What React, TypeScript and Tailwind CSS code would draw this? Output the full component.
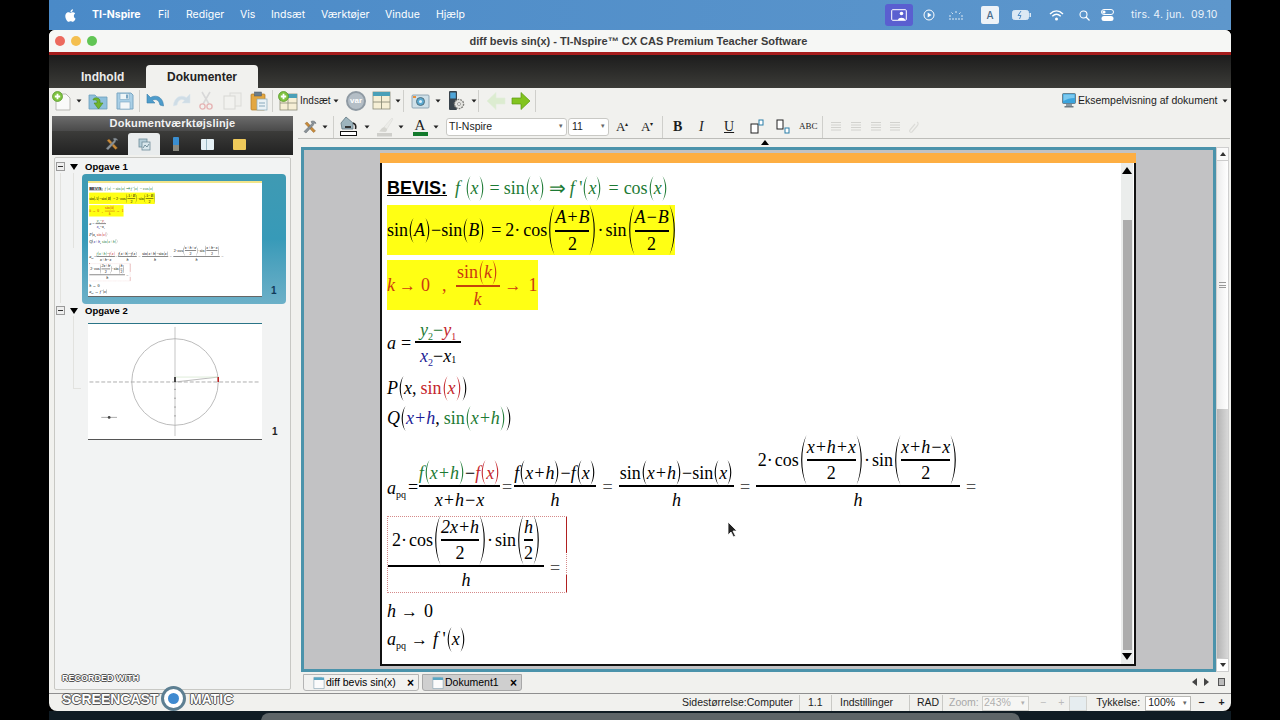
import React from "react";

const Paren = ({ h = 24, right = false, w = 6 }: { h?: number; right?: boolean; w?: number }) => (
  <svg width={w} height={h} viewBox={`0 0 ${w} ${h}`} className="shrink-0 block">
    <path
      transform={right ? `translate(${w},0) scale(-1,1)` : undefined}
      d={`M${w - 0.5},0 C${0.4},${h * 0.28} ${0.4},${h * 0.72} ${w - 0.5},${h} C${1.9},${h * 0.72} ${1.9},${h * 0.28} ${w - 0.5},0Z`}
      fill="currentColor"
    />
  </svg>
);

const I = ({ children }: { children: React.ReactNode }) => <span className="italic">{children}</span>;

const Par = ({ children, h = 25, w = 6 }: { children: React.ReactNode; h?: number; w?: number }) => (
  <span className="inline-flex items-center">
    <Paren h={h} w={w} />
    {children}
    <Paren h={h} w={w} right />
  </span>
);

const Frac = ({ n, d, line = "border-black", dh = "h-[25px]", cls = "" }: { n: React.ReactNode; d: React.ReactNode; line?: string; dh?: string; cls?: string }) => (
  <span className={`inline-flex flex-col items-stretch ${cls}`}>
    <span className={`flex items-center justify-center border-b-2 ${line} whitespace-nowrap`}>{n}</span>
    <span className={`flex items-center justify-center ${dh} whitespace-nowrap`}>{d}</span>
  </span>
);

const Half = ({ t }: { t: React.ReactNode }) => (
  <Frac n={<span className="h-[25px] flex items-center">{t}</span>} d="2" line="border-black" dh="h-[24px]" />
);

const Sub = ({ children, cls = "" }: { children: React.ReactNode; cls?: string }) => (
  <sub className={`text-[10px] not-italic align-baseline relative top-[4px] ${cls}`}>{children}</sub>
);

const Apq = () => (
  <span className="whitespace-nowrap">
    <I>a</I>
    <Sub>pq</Sub>
  </span>
);

const G = "text-[#1d7a34]";
const R = "text-[#c4262c]";
const B = "text-[#1c1c96]";

const Yellow1 = () => (
  <div className="flex items-center h-[50px] w-[288px] bg-[#ffff14] whitespace-nowrap overflow-hidden">
    <span>sin</span>
    <Par><I>A</I></Par>
    <span>−sin</span>
    <Par><I>B</I></Par>
    <span className="ml-[6px]">=</span>
    <span className="ml-[4px]">2·</span>
    <span className="ml-[3px]">cos</span>
    <Paren h={50} w={8} />
    <Half t={<I>A+B</I>} />
    <Paren h={50} w={8} right />
    <span>·</span>
    <span className="ml-[2px]">sin</span>
    <Paren h={50} w={8} />
    <Half t={<I>A−B</I>} />
    <Paren h={50} w={8} right />
  </div>
);

const DocMath = () => (
  <div className="pl-[5px] pt-[13px] font-['Liberation_Serif',serif] text-[18px] leading-none text-black">
    <div className="flex items-center h-[24px] whitespace-nowrap">
      <span className="font-['Liberation_Sans',sans-serif] font-bold underline text-[18px] mr-[8px]">BEVIS:</span>
      <span className={`flex items-center ${G}`}>
        <I>f</I>&nbsp;<Par><I>x</I></Par><span className="ml-[5px]">=</span><span className="ml-[4px]">sin</span><Par><I>x</I></Par><span className="mx-[4px] text-[20px]">⇒</span><I>f</I>&nbsp;'<Par><I>x</I></Par><span className="ml-[6px]">=</span><span className="ml-[5px]">cos</span><Par><I>x</I></Par>
      </span>
    </div>
    <div className="mt-[5px]"><Yellow1 /></div>
    <div className="flex items-center h-[50px] w-[151px] mt-[5px] bg-[#ffff14] text-[#cc3a10] whitespace-nowrap">
      <I>k</I><span className="ml-[4px] text-[17px]">→</span><span className="ml-[5px]">0</span><span className="ml-[12px]">,</span>
      <Frac n={<span className="flex items-center h-[25px]">sin<Par><I>k</I></Par></span>} d={<I>k</I>} line="border-[#c4420c]" dh="h-[24px]" cls="ml-[9px] w-[44px]" />
      <span className="ml-[5px] text-[17px]">→</span><span className="ml-[7px]">1</span>
    </div>
    <div className="flex items-center h-[48px] mt-[9px] whitespace-nowrap">
      <I>a</I><span className="ml-[5px] mr-[4px]">=</span>
      <Frac
        n={<span className="h-[23px] flex items-center"><span className={G}><I>y</I><Sub>2</Sub></span><span className={G}>−</span><span className={R}><I>y</I><Sub>1</Sub></span></span>}
        d={<span className="flex items-center"><span className={B}><I>x</I><Sub>2</Sub></span>−<I>x</I><Sub>1</Sub></span>}
        dh="h-[25px]"
        cls="w-[46px]"
      />
    </div>
    <div className="flex items-center h-[24px] mt-[9px] whitespace-nowrap">
      <I>P</I>
      <Par><I>x</I>,<span className={`ml-[4px] flex items-center ${R}`}>sin<Par><I>x</I></Par></span></Par>
    </div>
    <div className="flex items-center h-[24px] mt-[6px] whitespace-nowrap">
      <I>Q</I>
      <Par><span className={B}><I>x+h</I></span>,<span className={`ml-[4px] flex items-center ${G}`}>sin<Par><I>x+h</I></Par></span></Par>
    </div>
    <div className="flex items-end h-[77px] mt-[5px] whitespace-nowrap">
      <span className="mb-[15px] w-[21px]"><Apq /></span>
      <span className="mb-[16px] w-[11px]">=</span>
      <Frac
        n={<span className="flex items-center h-[25px]"><span className={`flex items-center ${G}`}><I>f</I><Par><I>x+h</I></Par></span>−<span className={`flex items-center ${R}`}><I>f</I><Par><I>x</I></Par></span></span>}
        d={<I>x+h−x</I>}
        cls="w-[81px]"
      />
      <span className="mb-[16px] w-[14px] text-center text-[#555]">=</span>
      <Frac n={<span className="flex items-center h-[25px]"><I>f</I><Par><I>x+h</I></Par>−<I>f</I><Par><I>x</I></Par></span>} d={<I>h</I>} cls="w-[82px]" />
      <span className="mb-[16px] w-[23px] text-center text-[#555]">=</span>
      <Frac n={<span className="flex items-center h-[25px]">sin<Par><I>x+h</I></Par>−sin<Par><I>x</I></Par></span>} d={<I>h</I>} cls="w-[115px]" />
      <span className="mb-[16px] w-[22px] text-center text-[#555]">=</span>
      <Frac
        n={<span className="flex items-center">2·<span className="ml-[2px]">cos</span><Paren h={50} w={8} /><Half t={<I>x+h+x</I>} /><Paren h={50} w={8} right />·<span className="ml-[2px]">sin</span><Paren h={50} w={8} /><Half t={<I>x+h−x</I>} /><Paren h={50} w={8} right /></span>}
        d={<I>h</I>}
        cls="w-[204px]"
      />
      <span className="mb-[16px] w-[22px] text-center text-[#555]">=</span>
    </div>
    <div className="relative flex items-end h-[77px] w-[180px] mt-[4px] border border-dotted border-[#d58a8a] whitespace-nowrap">
      <Frac
        n={<span className="flex items-center pl-[1px]">2·<span className="ml-[2px]">cos</span><Paren h={50} w={8} /><Half t={<I>2x+h</I>} /><Paren h={50} w={8} right />·<span className="ml-[2px]">sin</span><Paren h={50} w={8} /><Half t={<I>h</I>} /><Paren h={50} w={8} right /></span>}
        d={<I>h</I>}
        cls="w-[156px]"
      />
      <span className="mb-[15px] ml-[6px] text-[#555]">=</span>
      <span className="absolute right-[-1px] top-0 h-[36px] w-[1px] bg-[#b02020]" />
      <span className="absolute right-[-1px] bottom-0 h-[17px] w-[1px] bg-[#b02020]" />
    </div>
    <div className="flex items-center h-[24px] mt-[6px] whitespace-nowrap">
      <I>h</I><span className="ml-[5px] text-[17px]">→</span><span className="ml-[6px]">0</span>
    </div>
    <div className="flex items-center h-[26px] mt-[3px] whitespace-nowrap">
      <Apq /><span className="ml-[5px] mr-[5px] text-[17px]">→</span><I>f</I>&nbsp;'<Par><I>x</I></Par>
    </div>
  </div>
);

const Caret = ({ cls = "" }: { cls?: string }) => (
  <svg width="6" height="4" viewBox="0 0 6 4" className={`shrink-0 ${cls}`}><path d="M0.5 0.5H5.5L3 3.5Z" fill="#222" /></svg>
);

const Sep = ({ cls = "" }: { cls?: string }) => <span className={`w-[1px] h-[22px] bg-[#cfcfcb] shrink-0 ${cls}`} />;

const Doc = ({ plus = true }: { plus?: boolean }) => (
  <svg width="20" height="20" viewBox="0 0 20 20" className="shrink-0">
    <path d="M4 3H14L18 7V19H4Z" fill="#fafafa" stroke="#b9b9b4" />
    {plus && <circle cx="5.5" cy="5.5" r="5" fill="#7fc241" stroke="#4d9220" strokeWidth=".7" />}
    {plus && <path d="M5.5 2.8V8.2M2.8 5.5H8.2" stroke="#fff" strokeWidth="1.8" />}
  </svg>
);
const OpenIc = () => (
  <svg width="20" height="20" viewBox="0 0 20 20" className="shrink-0">
    <path d="M1 4H7L9 6H19V18H1Z" fill="#8fc0dc" stroke="#6d9fba" strokeWidth=".8" />
    <path d="M5 9C5 6 12 6 12 10V12H15L10.5 18L6 12H9V10.5C9 9 7 8.8 5 9Z" fill="#6fb52e" stroke="#4c8a1d" strokeWidth=".6" />
  </svg>
);
const SaveIc = () => (
  <svg width="18" height="18" viewBox="0 0 18 18" className="shrink-0">
    <path d="M1 1H15L17 3V17H1Z" fill="#a9cfe6" stroke="#7aa6c2" />
    <rect x="4" y="1.5" width="9" height="6" fill="#eef5f8" stroke="#7aa6c2" strokeWidth=".6" />
    <rect x="10" y="2.5" width="2" height="4" fill="#7aa6c2" />
    <rect x="4" y="10" width="10" height="7" fill="#f4f7f8" stroke="#7aa6c2" strokeWidth=".6" />
  </svg>
);
const UndoIc = ({ faded = false }: { faded?: boolean }) => (
  <svg width="20" height="18" viewBox="0 0 20 18" className="shrink-0">
    <g transform={faded ? "translate(20,0) scale(-1,1)" : undefined}>
      <path d="M2 2V11H10L7.5 8.5C10 6.5 14 7.5 15 13L18.5 14C18.5 7 13 1.5 5.5 5.5Z" fill={faded ? "#cfdde6" : "#4d9ccb"} stroke={faded ? "#dce6ec" : "#3a80ad"} strokeWidth=".6" />
    </g>
  </svg>
);
const CutIc = () => (
  <svg width="14" height="20" viewBox="0 0 14 20" className="shrink-0">
    <path d="M3 1L10 13M11 1L4 13" stroke="#d8d8d8" strokeWidth="1.6" />
    <circle cx="3.5" cy="15.5" r="2.6" fill="none" stroke="#e6b5b5" strokeWidth="1.4" />
    <circle cx="10.5" cy="15.5" r="2.6" fill="none" stroke="#e6b5b5" strokeWidth="1.4" />
  </svg>
);
const CopyIc = () => (
  <svg width="20" height="18" viewBox="0 0 20 18" className="shrink-0">
    <rect x="8" y="1" width="11" height="13" fill="#efefec" stroke="#dcdcd8" />
    <rect x="2" y="4" width="11" height="13" fill="#f2f2ef" stroke="#d8d8d4" />
  </svg>
);
const PasteIc = () => (
  <svg width="18" height="20" viewBox="0 0 18 20" className="shrink-0">
    <rect x="1" y="3" width="14" height="16" rx="1" fill="#e3a740" stroke="#b07a22" strokeWidth=".7" />
    <rect x="4.5" y="1" width="7" height="4" fill="#6a7d8c" stroke="#4c5a66" strokeWidth=".5" />
    <rect x="7" y="8" width="10" height="11" fill="#eaf2f5" stroke="#88a9bb" strokeWidth=".7" />
    <path d="M9 12H15M9 15H15" stroke="#88a9bb" />
  </svg>
);
const InsertIc = () => (
  <svg width="20" height="20" viewBox="0 0 20 20" className="shrink-0">
    <rect x="2" y="3" width="17" height="16" fill="#f6efd5" stroke="#8d8d78" strokeWidth=".8" />
    <rect x="2" y="3" width="17" height="4" fill="#4aa0b8" />
    <path d="M10 7V19M2 12H19" stroke="#8d8d78" strokeWidth=".8" />
    <circle cx="5.5" cy="5.5" r="5" fill="#7fc241" stroke="#4d9220" strokeWidth=".7" />
    <path d="M5.5 2.8V8.2M2.8 5.5H8.2" stroke="#fff" strokeWidth="1.8" />
  </svg>
);
const VarIc = () => (
  <span className="w-[20px] h-[20px] rounded-full bg-[#b4bec6] border-2 border-[#8f9aa3] text-white text-[8px] font-bold flex items-center justify-center font-['Liberation_Sans',sans-serif] shrink-0">var</span>
);
const TableIc = () => (
  <svg width="19" height="19" viewBox="0 0 19 19" className="shrink-0">
    <rect x="1" y="1" width="17" height="17" fill="#f6efd5" stroke="#8d8d78" strokeWidth=".8" />
    <rect x="1" y="1" width="17" height="4" fill="#4aa0b8" />
    <path d="M9.5 5V18M1 11H18" stroke="#8d8d78" strokeWidth=".9" />
  </svg>
);
const CamIc = () => (
  <svg width="19" height="16" viewBox="0 0 19 16" className="shrink-0">
    <rect x="1" y="2" width="17" height="13" rx="1" fill="#cfe0e8" stroke="#7d98a6" strokeWidth=".8" />
    <circle cx="9.5" cy="8.5" r="4" fill="#5aa9d0" stroke="#53707e" />
    <circle cx="9.5" cy="8.5" r="1.5" fill="#dff0f8" />
    <rect x="2" y="3" width="3" height="2" fill="#e98f3a" />
  </svg>
);
const DevIc = () => (
  <svg width="17" height="21" viewBox="0 0 17 21" className="shrink-0">
    <rect x="1" y="1" width="8" height="19" rx="1" fill="#39434b" />
    <rect x="2.2" y="2.5" width="5.6" height="6" fill="#4fa5d8" />
    <circle cx="11" cy="14" r="4.6" fill="#e4e4e0" stroke="#7c7c78" strokeWidth="1.4" strokeDasharray="1.8 1" />
    <circle cx="11" cy="14" r="1.5" fill="#fff" stroke="#7c7c78" strokeWidth=".7" />
  </svg>
);
const ArrowIc = ({ left = false }: { left?: boolean }) => (
  <svg width="20" height="20" viewBox="0 0 20 20" className="shrink-0">
    <g transform={left ? "translate(20,0) scale(-1,1)" : undefined}>
      <path d="M1 7H10V1.5L19 10L10 18.5V13H1Z" fill={left ? "#dcecd0" : "#82c41f"} stroke={left ? "#e3eedb" : "#5b9a12"} strokeWidth=".7" />
    </g>
  </svg>
);
const ToolsIc = ({ w = 14 }: { w?: number }) => (
  <svg width={w} height={w} viewBox="0 0 14 14" className="shrink-0">
    <path d="M2 3.5L10.5 12.5L12.5 11L4 2Z" fill="#c98b3a" stroke="#7d5520" strokeWidth=".4" />
    <path d="M1 11.5L9 3.5L8 1.5C10 .3 12.5 1 13 3.5L11 3L10.5 5L3 13Z" fill="#8a9298" stroke="#4e565c" strokeWidth=".4" />
  </svg>
);
const BucketIc = () => (
  <svg width="20" height="21" viewBox="0 0 20 21" className="shrink-0">
    <path d="M7 1L14 7L14 13H3L2 7Z" fill="#9db4bd" stroke="#5f7680" strokeWidth=".8" />
    <path d="M14 7C17 8 17 11 16.5 13" stroke="#222" strokeWidth="1.6" fill="none" />
    <path d="M6 11H12" stroke="#333" strokeWidth="2" />
    <rect x="1.5" y="15.5" width="16" height="4" fill="#fff" stroke="#111" />
  </svg>
);
const BrushIc = () => (
  <svg width="18" height="20" viewBox="0 0 18 20" className="shrink-0">
    <path d="M16 1L8 10L11 12L17 2Z" fill="#ecece8" stroke="#dcdcd8" strokeWidth=".6" />
    <path d="M8 10C5 11 5 13 3 14.5L9.5 15C11 14 11.5 12.5 11 12Z" fill="#d5d5d0" />
    <rect x="1" y="16" width="15" height="3.5" fill="#cfcfcb" />
  </svg>
);
const MonitorIc = () => (
  <svg width="14" height="15" viewBox="0 0 14 15" className="shrink-0">
    <rect x="0.5" y="0.5" width="13" height="10" rx="1" fill="#3ba4dd" stroke="#54646e" strokeWidth=".7" />
    <path d="M1.5 1.5H12.5V5C8 5 5 6 1.5 8Z" fill="#7cc9ef" />
    <rect x="4" y="11" width="6" height="2.5" fill="#8b9aa3" />
    <rect x="2.5" y="13" width="9" height="1.5" fill="#6d7a82" />
  </svg>
);
const Tiny = ({ cls = "" }: { cls?: string }) => (
  <svg width="12" height="14" viewBox="0 0 14 15" className={`shrink-0 ${cls}`}>
    <path d="M1 1H10L13 4V14H1Z" fill="#fbfbfb" stroke="#8ea8b5" strokeWidth=".8" />
    <rect x="1" y="1" width="12" height="3" fill="#58a6c4" />
  </svg>
);
const AlignIc = () => (
  <svg width="12" height="11" viewBox="0 0 12 11" className="shrink-0">
    <path d="M1 1.5H11M1 4H11M1 6.5H11M1 9H11" stroke="#d2d2ce" />
  </svg>
);

const Toolbar1 = () => (
  <div className="flex items-center h-[25px] pl-[3px] bg-[#f1f1ee] text-[#1c1c1c]">
    <Doc />
    <Caret cls="ml-[4px]" />
    <span className="ml-[6px]"><OpenIc /></span>
    <span className="ml-[8px]"><SaveIc /></span>
    <Sep cls="ml-[5px]" />
    <span className="ml-[5px]"><UndoIc /></span>
    <span className="ml-[7px]"><UndoIc faded /></span>
    <span className="ml-[7px]"><CutIc /></span>
    <span className="ml-[9px]"><CopyIc /></span>
    <span className="ml-[8px]"><PasteIc /></span>
    <Sep cls="ml-[4px]" />
    <span className="ml-[5px]"><InsertIc /></span>
    <span className="ml-[2px] text-[10px] w-[32px]">Indsæt</span>
    <Caret cls="ml-[1px]" />
    <span className="ml-[7px]"><VarIc /></span>
    <span className="ml-[6px]"><TableIc /></span>
    <Caret cls="ml-[4px]" />
    <Sep cls="ml-[2px]" />
    <span className="ml-[7px]"><CamIc /></span>
    <Caret cls="ml-[5px]" />
    <span className="ml-[7px]"><DevIc /></span>
    <Caret cls="ml-[6px]" />
    <Sep cls="ml-[1px]" />
    <span className="ml-[7px]"><ArrowIc left /></span>
    <span className="ml-[5px]"><ArrowIc /></span>
    <Sep cls="ml-[4px]" />
    <span className="ml-auto flex items-center gap-[2px] pr-[3px]">
      <MonitorIc />
      <span className="text-[10.5px] w-[140px] whitespace-nowrap">Eksempelvisning af dokument</span>
      <Caret cls="ml-[2px]" />
    </span>
  </div>
);

const Toolbar2 = () => (
  <div className="relative flex items-center h-[24px] mt-[2px] ml-[5px] mr-[1px] pl-[5px] border-b border-[#bdbdb9] text-[#1c1c1c]">
    <ToolsIc />
    <Caret cls="ml-[5px]" />
    <Sep cls="ml-[5px]" />
    <span className="ml-[5px]"><BucketIc /></span>
    <Caret cls="ml-[5px]" />
    <span className="ml-[6px]"><BrushIc /></span>
    <Caret cls="ml-[4px]" />
    <span className="ml-[8px] flex flex-col items-center w-[16px] leading-none">
      <span className="font-['Liberation_Serif',serif] text-[15px] h-[13px]">A</span>
      <span className="w-[15px] h-[4px] bg-[#137a2c] mt-[1px]" />
    </span>
    <Caret cls="ml-[5px]" />
    <span className="ml-[7px] w-[121px] h-[18px] bg-white border border-[#c9c9c5] rounded-[3px] flex items-center pl-[2px] text-[10.5px] shrink-0">TI-Nspire<span className="ml-auto mr-[3px] text-[7px] text-[#666]">▾</span></span>
    <span className="ml-[1px] w-[41px] h-[18px] bg-white border border-[#c9c9c5] rounded-[3px] flex items-center pl-[3px] text-[10.5px] shrink-0">11<span className="ml-auto mr-[3px] text-[7px] text-[#666]">▾</span></span>
    <span className="ml-[7px] w-[14px] font-['Liberation_Serif',serif] text-[13px] flex items-start">A<span className="text-[6px] mt-[3px]">▴</span></span>
    <span className="ml-[11px] w-[15px] font-['Liberation_Serif',serif] text-[13px] flex items-start">A<span className="text-[6px] mt-[3px]">▾</span></span>
    <Sep cls="ml-[6px]" />
    <span className="ml-[10px] w-[10px] font-['Liberation_Serif',serif] font-bold text-[14px]">B</span>
    <span className="ml-[16px] w-[8px] font-['Liberation_Serif',serif] italic text-[14px]">I</span>
    <span className="ml-[17px] w-[11px] font-['Liberation_Serif',serif] text-[14px] underline">U</span>
    <svg width="15" height="15" viewBox="0 0 15 15" className="ml-[15px] shrink-0"><rect x="1" y="5" width="7" height="9" fill="#fff" stroke="#222" /><rect x="9" y="1" width="4" height="5" fill="#fff" stroke="#2a7ea8" /></svg>
    <svg width="15" height="15" viewBox="0 0 15 15" className="ml-[11px] shrink-0"><rect x="1" y="1" width="6" height="9" fill="#fff" stroke="#222" /><rect x="9" y="9" width="4" height="5" fill="#fff" stroke="#2a7ea8" /></svg>
    <span className="ml-[8px] w-[20px] font-['Liberation_Serif',serif] text-[9px]">ABC</span>
    <Sep cls="ml-[3px]" />
    <span className="ml-[7px]"><AlignIc /></span>
    <span className="ml-[8px]"><AlignIc /></span>
    <span className="ml-[8px]"><AlignIc /></span>
    <span className="ml-[7px]"><AlignIc /></span>
    <svg width="12" height="14" viewBox="0 0 12 14" className="ml-[7px] shrink-0"><path d="M9 2C11 3 10 5 9 6L4 12C2 13 1 11 2 10L7 4" fill="none" stroke="#dcdcd8" strokeWidth="1.2" /></svg>
    <span className="absolute left-[463px] top-[25px] w-0 h-0 border-x-[4px] border-x-transparent border-b-[5px] border-b-black" />
  </div>
);

const Thumb2 = () => (
  <svg width="174" height="117" viewBox="0 0 174 117" className="block shrink-0 bg-white border-t border-t-[#2a7487] border-b border-b-[#555]">
    <path d="M87 3V114" stroke="#b5b5b5" strokeWidth=".8" />
    <path d="M0 59H174" stroke="#999" strokeWidth=".8" strokeDasharray="4 2" />
    <circle cx="87" cy="59" r="44" fill="none" stroke="#aaa" strokeWidth=".8" />
    <path d="M87 59L131 54V59" fill="none" stroke="#aaa" strokeWidth=".8" />
    <path d="M87 54H131" stroke="#d6e8d0" strokeWidth=".8" />
    <path d="M131 54V59" stroke="#c02020" strokeWidth="1.5" />
    <path d="M87 54V59" stroke="#111" strokeWidth="1.5" />
    <path d="M87 66V100" stroke="#444" strokeWidth=".8" strokeDasharray="1 8" />
    <path d="M12 95H28" stroke="#888" strokeWidth=".7" />
    <circle cx="20" cy="95" r="1.4" fill="#444" />
  </svg>
);

const TreeRow = ({ title, cls }: { title: string; cls: string }) => (
  <div className={`flex items-center h-[13px] ${cls} relative`}>
    <span className="ml-[1px] w-[9px] h-[9px] border border-[#9a9a9a] bg-[#eee] flex items-center justify-center"><span className="w-[5px] h-[1px] bg-[#333]" /></span>
    <span className="ml-[5px] w-0 h-0 border-x-[4.5px] border-x-transparent border-t-[6px] border-t-black" />
    <span className="ml-[7px] text-[9.5px] font-bold leading-none">{title}</span>
  </div>
);

const Sidebar = () => (
  <div className="ml-[3px] w-[241px] flex flex-col shrink-0 mt-[3px] bg-[#f1f1ee]">
    <div className="h-[15px] bg-gradient-to-b from-[#6c6c6c] to-[#4a4a4a] text-[#f2f2f2] text-[11px] font-semibold tracking-[0.2px] text-center leading-[15px]">Dokumentværktøjslinje</div>
    <div className="h-[24px] bg-gradient-to-b from-[#3c3c3a] to-[#222] flex items-end pl-[53px] pb-0">
      <span className="mb-[4px]"><ToolsIc /></span>
      <span className="ml-[9px] w-[32px] h-[22px] bg-[#e9eced] rounded-t-[3px] flex items-center justify-center">
        <svg width="13" height="13" viewBox="0 0 13 13"><rect x="1" y="1" width="8" height="8" fill="#b4cdd8" stroke="#6e8c99" strokeWidth=".8" /><rect x="4" y="4" width="8" height="8" fill="#d9e7ed" stroke="#6e8c99" strokeWidth=".8" /><path d="M5 10L7 7L9 9L11 6" stroke="#5d7c8a" fill="none" strokeWidth=".8" /></svg>
      </span>
      <span className="ml-[13px] mb-[4px] w-[6px] h-[14px] flex flex-col"><span className="h-[8px] bg-[#3a8ed0] rounded-t-[1px]" /><span className="h-[6px] bg-[#8a8a80]" /></span>
      <span className="ml-[22px] mb-[5px] w-[13px] h-[11px] bg-[#e6f1f6] rounded-[1px] flex"><span className="w-[6px] border-r border-[#9bb8c4] h-full" /></span>
      <span className="ml-[19px] mb-[5px] w-[13px] h-[11px] bg-[#eec95a] rounded-[1px]" />
    </div>
    <div className="relative mt-[2px] mx-[2px] h-[533px] border border-[#c8c8c4] rounded-[2px] bg-[#f2f3f3] font-['Liberation_Sans',sans-serif] text-black overflow-hidden">
      <span className="absolute left-[5px] top-[15px] h-[130px] w-[1px] bg-[#e2e2df]" />
      <span className="absolute left-[18px] top-[15px] h-[75px] w-[1px] bg-[#e2e2df]" />
      <span className="absolute left-[18px] top-[158px] h-[72px] w-[1px] bg-[#e2e2df]" />
      <span className="absolute left-[18px] top-[230px] h-[1px] w-[8px] bg-[#e2e2df]" />
      <TreeRow title="Opgave 1" cls="mt-[2px]" />
      <div className="ml-[27px] mt-[1px] w-[204px] h-[130px] rounded-[4px] bg-gradient-to-b from-[#3f9ab3] via-[#379ab8] to-[#6cb0c8] flex pl-[6px] pt-[7px] relative">
        <div className="w-[174px] h-[116px] bg-white overflow-hidden border-t-2 border-t-[#f2e58a] border-b border-b-[#666] shrink-0">
          <div className="w-[756px] origin-top-left scale-[0.228]"><DocMath /></div>
        </div>
        <span className="ml-[9px] self-end mb-[6px] text-[10px] font-bold text-[#103a5a]">1</span>
      </div>
      <TreeRow title="Opgave 2" cls="mt-[0px]" />
      <div className="ml-[33px] mt-[6px] flex">
        <Thumb2 />
        <span className="ml-[10px] self-end mb-[1px] text-[10px] font-bold text-[#222]">1</span>
      </div>
    </div>
  </div>
);

const Page = () => (
  <div className="w-[756px] h-[513px] flex flex-col shrink-0">
    <div className="h-[10px] bg-[#fdae42] shrink-0" />
    <div className="flex-1 bg-white border-x-2 border-b-2 border-[#111] flex min-h-0">
      <div className="flex-1 min-w-0"><DocMath /></div>
      <div className="w-[12px] mr-[1px] flex flex-col items-center bg-[#ebedec]">
        <span className="mt-[4px] w-0 h-0 border-x-[5px] border-x-transparent border-b-[7px] border-b-black" />
        <span className="mt-[46px] w-[9px] h-[430px] bg-[#acacac]" />
        <span className="mt-auto mb-[4px] w-0 h-0 border-x-[5px] border-x-transparent border-t-[7px] border-t-black" />
      </div>
    </div>
  </div>
);

const MainPane = () => (
  <div className="flex-1 min-w-0 flex flex-col font-['Liberation_Sans',sans-serif]">
    <Toolbar2 />
    <div className="flex mt-[8px] ml-[8px] h-[525px]">
      <div className="w-[915px] border-[3px] border-[#4b93ab] bg-[#c2c2c4] pl-[76px] pt-[3px] overflow-hidden">
        <Page />
      </div>
      <div className="w-[13px] flex flex-col border border-[#cfcfcf] bg-[#fafafa]">
        <span className="h-[13px] flex items-center justify-center border-b border-[#ccc]"><span className="w-0 h-0 border-x-[3px] border-x-transparent border-b-[4px] border-b-[#333]" /></span>
        <span className="h-[248px] bg-gradient-to-r from-[#ececec] to-[#ffffff] flex items-center justify-center"><span className="w-[7px] h-[6px] border-y border-[#999] flex items-center"><span className="w-full h-[1px] bg-[#999]" /></span></span>
        <span className="flex-1 bg-gradient-to-r from-[#b4b4b4] to-[#d8d8d8]" />
        <span className="h-[13px] flex items-center justify-center border-t border-[#ccc] bg-white"><span className="w-0 h-0 border-x-[3px] border-x-transparent border-t-[4px] border-t-[#333]" /></span>
      </div>
    </div>
    <div className="flex items-start h-[19px] ml-[10px] pt-[2px] text-[10.5px] text-black">
      <div className="w-[116px] h-[17px] bg-[#f2f2f0] border border-[#b4b4b4] rounded-b-[3px] flex items-center pl-[9px]">
        <Tiny /><span className="ml-[1px] flex-1 whitespace-nowrap">diff bevis sin(x)</span><span className="mr-[4px] font-bold text-[12px] leading-none">×</span>
      </div>
      <div className="ml-[3px] w-[100px] h-[17px] bg-[#cfcfcf] border border-[#a8a8a8] rounded-b-[3px] flex items-center pl-[9px]">
        <Tiny /><span className="ml-[1px] flex-1 whitespace-nowrap">Dokument1</span><span className="mr-[4px] font-bold text-[12px] leading-none">×</span>
      </div>
      <div className="ml-auto mr-[6px] mt-[4px] flex items-center gap-[7px]">
        <span className="w-0 h-0 border-y-[4px] border-y-transparent border-r-[5px] border-r-[#444]" />
        <span className="w-0 h-0 border-y-[4px] border-y-transparent border-l-[5px] border-l-[#444]" />
        <span className="w-[7px] h-[8px] border border-[#555] bg-[#bbb] ml-[2px]" />
      </div>
    </div>
  </div>
);

const StatusBar = () => (
  <div className="flex items-center h-[18px] pl-[632px] pt-[1px] text-[10.5px] text-[#1d1d1d] font-['Liberation_Sans',sans-serif] border-t border-[#8f8f8f] whitespace-nowrap">
    <span className="w-[119px] pl-[1px] border-r border-[#c9c9c5]">Sidestørrelse:Computer</span>
    <span className="w-[32px] pl-[8px] border-r border-[#c9c9c5]">1.1</span>
    <span className="w-[78px] pl-[8px] border-r border-[#c9c9c5]">Indstillinger</span>
    <span className="w-[33px] pl-[7px] border-r border-[#c9c9c5]">RAD</span>
    <span className="w-[39px] pl-[6px] text-[#a8a8a8]">Zoom:</span>
    <span className="w-[47px] h-[15px] border border-[#cfcfcb] bg-[#f6f6f4] flex items-center pl-[1px] text-[#b0b0b0]">243%<span className="ml-auto mr-[3px] text-[7px]">▾</span></span>
    <span className="ml-[11px] text-[#bbb]">−</span>
    <span className="ml-[12px] text-[#bbb]">+</span>
    <span className="ml-[5px] w-[18px] h-[15px] border border-[#d2d2ce] bg-[#e6edf0]" />
    <span className="ml-[9px] w-[49px]">Tykkelse:</span>
    <span className="w-[46px] h-[15px] border border-[#b9b9b5] bg-white flex items-center pl-[2px]">100%<span className="ml-auto mr-[3px] text-[7px] text-[#666]">▾</span></span>
    <span className="ml-[7px] font-bold">−</span>
    <span className="ml-[14px] font-bold">+</span>
  </div>
);

const MenuBar = () => (
  <div className="h-[30px] shrink-0 bg-gradient-to-r from-[#4a8ac8] to-[#5e97cc] flex items-center text-white text-[10.5px] font-['Inter',sans-serif] whitespace-nowrap">
    <svg width="12" height="13" viewBox="0 0 14 16" className="ml-[16px] shrink-0"><path d="M10.5 8.5C10.5 6.6 12 5.7 12.1 5.6C11.2 4.3 9.8 4.1 9.3 4.1C8.1 4 7 4.8 6.4 4.8C5.8 4.8 4.8 4.1 3.8 4.1C2.5 4.1 1.3 4.9 .6 6C-.7 8.4 .3 11.9 1.6 13.8C2.2 14.7 3 15.7 4 15.7C5 15.6 5.4 15 6.6 15C7.8 15 8.1 15.7 9.2 15.6C10.3 15.6 11 14.7 11.6 13.8C12.3 12.7 12.6 11.7 12.6 11.6C12.6 11.6 10.5 10.8 10.5 8.5ZM8.6 2.8C9.1 2.2 9.5 1.3 9.4 .4C8.6 .4 7.7 .9 7.1 1.5C6.6 2.1 6.2 3 6.3 3.9C7.2 4 8 3.5 8.6 2.8Z" fill="#fff" /></svg>
    <span className="ml-[15px] w-[49px] font-bold">TI-Nspire</span>
    <span className="ml-[17px] w-[11px]">Fil</span>
    <span className="ml-[17px] w-[37px]">Rediger</span>
    <span className="ml-[17px] w-[14px]">Vis</span>
    <span className="ml-[17px] w-[33px]">Indsæt</span>
    <span className="ml-[17px] w-[47px]">Værktøjer</span>
    <span className="ml-[17px] w-[33px]">Vindue</span>
    <span className="ml-[18px] w-[28px]">Hjælp</span>
    <span className="ml-[421px] w-[28px] h-[22px] bg-[#5a5fd0] rounded-[3px] flex items-center justify-center shrink-0">
      <svg width="16" height="12" viewBox="0 0 16 12"><rect x=".7" y=".7" width="14.6" height="10.6" rx="1" fill="none" stroke="#fff" /><circle cx="10.5" cy="4.5" r="1.8" fill="#fff" /><path d="M7 11C7 8 14 8 14 11Z" fill="#fff" /></svg>
    </span>
    <svg width="12" height="12" viewBox="0 0 12 12" className="ml-[10px] shrink-0"><circle cx="6" cy="6" r="5" fill="none" stroke="#fff" /><path d="M4.7 3.5L8.5 6L4.7 8.5Z" fill="#fff" /></svg>
    <svg width="16" height="10" viewBox="0 0 16 10" className="ml-[13px] shrink-0"><path d="M1 9H15M8 1V3M3.5 2.5L5 4M12.5 2.5L11 4M1 6H3M13 6H15" stroke="#fff" strokeDasharray="2 1" strokeWidth=".8" /></svg>
    <span className="ml-[17px] w-[18px] h-[18px] bg-[#eef3f8] rounded-[2px] text-[#4a6a8a] flex items-center justify-center text-[10px] font-medium shrink-0">A</span>
    <svg width="20" height="10" viewBox="0 0 20 10" className="ml-[13px] shrink-0"><rect x=".5" y=".5" width="16" height="9" rx="2" fill="#dbe8f4" stroke="#dbe8f4" /><rect x="17.5" y="3" width="1.5" height="4" fill="#dbe8f4" /><path d="M9 1L6 5.5H9L7.5 9" stroke="#4f8cc7" fill="none" /></svg>
    <svg width="15" height="11" viewBox="0 0 15 11" className="ml-[17px] shrink-0"><path d="M1 4C5 0 10 0 14 4M3.3 6.2C6 3.7 9 3.7 11.7 6.2" fill="none" stroke="#fff" strokeWidth="1.4" /><circle cx="7.5" cy="9" r="1.5" fill="#fff" /></svg>
    <svg width="11" height="11" viewBox="0 0 11 11" className="ml-[15px] shrink-0"><circle cx="4.5" cy="4.5" r="3.5" fill="none" stroke="#fff" strokeWidth="1.1" /><path d="M7 7L10.5 10.5" stroke="#fff" strokeWidth="1.2" /></svg>
    <svg width="13" height="13" viewBox="0 0 13 13" className="ml-[11px] shrink-0"><rect x=".5" y=".5" width="12" height="5" rx="2.5" fill="none" stroke="#fff" /><circle cx="3" cy="3" r="1.6" fill="#fff" /><rect x=".5" y="7" width="12" height="5" rx="2.5" fill="#fff" /></svg>
    <span className="ml-[17px] text-[10.5px] text-[#eaf2fa] tracking-[0.15px]">tirs. 4. jun.&nbsp;&nbsp;09.10</span>
  </div>
);

const Watermark = () => (
  <div className="absolute left-[62px] top-[673px] font-['Liberation_Sans',sans-serif] font-bold text-white leading-none [text-shadow:-1px_0_#555,1px_0_#555,0_-1px_#555,0_1px_#555] whitespace-nowrap">
    <div className="text-[9px] mt-[1px]">RECORDED WITH</div>
    <div className="flex items-center mt-[3px]">
      <span className="text-[14px] w-[96px]">SCREENCAST</span>
      <span className="w-[25px] h-[25px] rounded-full border-[3px] border-[#5d7f92] bg-white flex items-center justify-center ml-[3px]"><span className="w-[11px] h-[11px] rounded-full bg-[#3f8ad0]" /></span>
      <span className="text-[14px] ml-[4px]">MATIC</span>
    </div>
  </div>
);

export default function App() {
  return (
    <div className="relative w-[1280px] h-[720px] overflow-hidden bg-black px-[49px] flex flex-col font-['Liberation_Sans',sans-serif]">
      <MenuBar />
      <div className="h-[681px] shrink-0 bg-[#f1f1ee] rounded-t-[6px] rounded-b-[8px] flex flex-col overflow-hidden">
        <div className="h-[22px] shrink-0 flex items-center bg-[#f6f7f5] relative">
          <span className="ml-[6px] w-[10px] h-[10px] rounded-full bg-[#ec6a5e]" />
          <span className="ml-[6px] w-[10px] h-[10px] rounded-full bg-[#f4bf4f]" />
          <span className="ml-[6px] w-[10px] h-[10px] rounded-full bg-[#61c554]" />
          <span className="flex-1 text-center text-[11px] font-bold text-[#3c3c3c] pr-[51px]">diff bevis sin(x) - TI-Nspire™ CX CAS Premium Teacher Software</span>
        </div>
        <div className="h-[3px] shrink-0 bg-[#a51c1c]" />
        <div className="h-[33px] shrink-0 bg-gradient-to-b from-[#1d1d1d] to-[#3c3c38] flex items-end text-[12px] font-bold">
          <span className="ml-[32px] w-[64px] h-[23px] flex items-center text-[#ececec]">Indhold</span>
          <span className="w-[112px] h-[23px] ml-[1px] bg-[#f1f1ee] rounded-t-[4px] flex items-center justify-center text-[#222]">Dokumenter</span>
        </div>
        <Toolbar1 />
        <div className="flex flex-1 min-h-0">
          <Sidebar />
          <MainPane />
        </div>
        <StatusBar />
      </div>
      <div className="flex-1 min-h-0 bg-[#101c24] pl-[212px] overflow-hidden">
        <div className="w-[759px] h-[9px] mt-[2px] bg-[#5e6568] rounded-t-[8px]" />
      </div>
      <Watermark />
      <svg width="12" height="18" viewBox="0 0 12 18" className="absolute left-[727px] top-[521px]"><path d="M1 1V14L4 11L6.5 16L8.5 15L6 10H10Z" fill="#222" stroke="#fff" strokeWidth=".8" /></svg>
    </div>
  );
}
